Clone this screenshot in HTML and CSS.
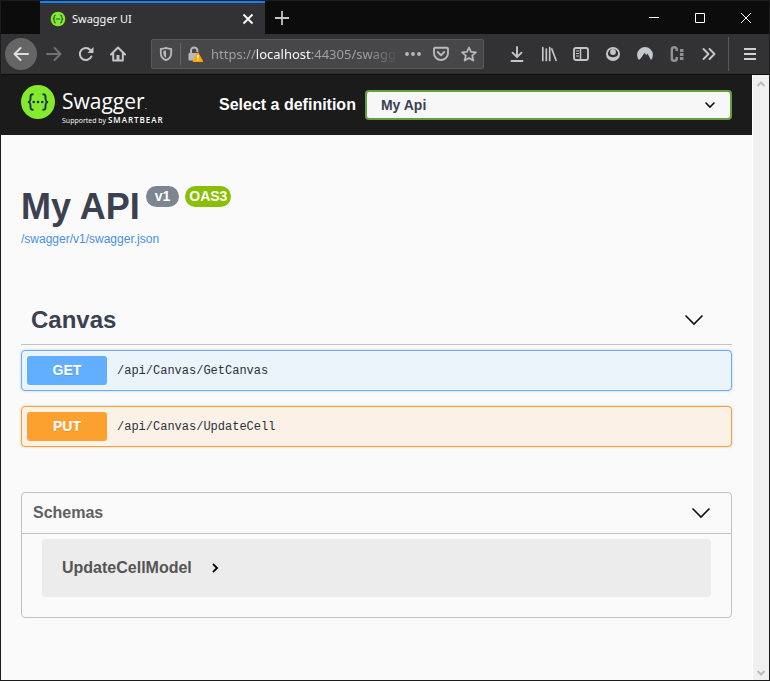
FILE: index.html
```html
<!DOCTYPE html>
<html lang="en">
<head>
<meta charset="utf-8">
<meta name="viewport" content="width=device-width, initial-scale=1">
<title>Swagger UI</title>
<link rel="stylesheet" href="styles.css">
</head>
<body>
<div class="window">
  <div class="tabbar">
    <div class="tab">
      <svg class="favicon" viewBox="0 0 16 16"><circle cx="8" cy="8" r="7.3" fill="#85ea2d"/><path d="M5.7 4.2c-1.4 0-1.4.6-1.4 1.9S3.900 7.800 2.900 8c1 .2 1.400.6 1.400 1.900s0 1.900 1.400 1.900M10.300 4.200c1.400 0 1.400.6 1.400 1.900S12.100 7.800 13.100 8c-1 .2-1.400.6-1.400 1.900s0 1.900-1.400 1.900M5.800 8h4.600" fill="none" stroke="#25602f" stroke-width="1.2"/></svg>
      <span class="tab-title">Swagger UI</span>
      <button class="tab-close" aria-label="Close tab"><svg width="12" height="12" viewBox="0 0 12 12"><path d="M1.500 1.500l9 9M10.500 1.500l-9 9" stroke="#f9f9fa" stroke-width="1.900"/></svg></button>
    </div>
    <button class="new-tab" aria-label="New tab"><svg width="14" height="14" viewBox="0 0 14 14"><path d="M7 0v14M0 7h14" stroke="#c6c6c8" stroke-width="1.800"/></svg></button>
    <div class="window-controls">
      <button aria-label="Minimize"><svg width="12" height="12" viewBox="0 0 12 12"><path d="M1 5.500h10" stroke="#fff"/></svg></button>
      <button aria-label="Maximize"><svg width="12" height="12" viewBox="0 0 12 12"><path d="M1.500 1.500h9v9h-9z" fill="none" stroke="#fff"/></svg></button>
      <button aria-label="Close"><svg width="12" height="12" viewBox="0 0 12 12"><path d="M1 1l10 10M11 1L1 11" stroke="#fff"/></svg></button>
    </div>
  </div>

  <div class="toolbar">
    <button class="tool back" aria-label="Back"><svg class="icon" viewBox="0 0 16 16"><path d="M15 8H1.500M7.500 2L1.500 8l6 6" fill="none" stroke="#dededf" stroke-width="2" stroke-linecap="round" stroke-linejoin="round"/></svg></button>
    <button class="tool" aria-label="Forward"><svg class="icon" viewBox="0 0 16 16"><path d="M1 8h13.500M8.500 2l6 6-6 6" fill="none" stroke="#717173" stroke-width="2" stroke-linecap="round" stroke-linejoin="round"/></svg></button>
    <button class="tool" aria-label="Reload"><svg class="icon" viewBox="0 0 16 16"><path d="M13.300 10.500A6 6 0 1 1 12.300 4" fill="none" stroke="#c6c6c8" stroke-width="2" stroke-linecap="round"/><path d="M15.500 1v6h-6z" fill="#c6c6c8"/></svg></button>
    <button class="tool" aria-label="Home"><svg class="icon" viewBox="0 0 16 16"><path d="M1 8.500L8 1.500l7 7M3.200 7v7.500h9.600V7" fill="none" stroke="#c6c6c8" stroke-width="2" stroke-linecap="round" stroke-linejoin="round"/><path d="M6.500 15v-6h3v6z" fill="#c6c6c8"/></svg></button>
    <div class="urlbar">
      <svg class="icon" viewBox="0 0 16 16"><path d="M8 1.800c1.700.7 3.500 1 5.200 1v4.400c0 3.400-2 5.800-5.200 7-3.200-1.200-5.200-3.600-5.200-7V2.800c1.700 0 3.500-.3 5.200-1z" fill="none" stroke="#b9b9bb" stroke-width="1.800" stroke-linejoin="round"/><path d="M8 4.200v7.600c-1.700-1-2.600-2.500-2.600-4.600V4.800c.9 0 1.800-.2 2.600-.6z" fill="#b9b9bb"/></svg>
      <span class="url-divider"></span>
      <svg class="icon" viewBox="0 0 16 16"><path d="M4 8V4.700a3.200 3.200 0 0 1 6.400-.2V6" fill="none" stroke="#b9b9bb" stroke-width="2"/><rect x="1.500" y="7" width="9" height="7.500" rx="1" fill="#b9b9bb"/><path d="M11 6.700l4.800 8.800H6.200z" fill="#ffa800" stroke="#ffa800" stroke-linejoin="round"/><path d="M11 9v3.300M11 13.300v1.200" stroke="#fff" stroke-width="1.300"/></svg>
      <span class="url">https://<b>localhost</b>:44305/swagg</span>
      <svg class="icon" viewBox="0 0 16 16" fill="#b9b9bb"><circle cx="2" cy="8" r="1.900"/><circle cx="8" cy="8" r="1.900"/><circle cx="14" cy="8" r="1.900"/></svg>
      <svg class="icon" viewBox="0 0 16 16" fill="none" stroke="#b9b9bb" stroke-width="1.900" stroke-linecap="round" stroke-linejoin="round"><path d="M2 1.800h12q1 0 1 1v4.400a7 6.800 0 0 1-14 0V2.800q0-1 1-1z"/><path d="M4.700 6L8 9.200 11.300 6"/></svg>
      <svg class="icon" viewBox="0 0 16 16"><path d="M8 1.500l2 4.400 4.900.5-3.700 3.200 1.100 4.900L8 12l-4.300 2.500 1.100-4.900L1.100 6.400l4.900-.5z" fill="none" stroke="#b9b9bb" stroke-width="1.800" stroke-linejoin="round"/></svg>
    </div>
    <button class="tool" aria-label="Downloads"><svg class="icon" viewBox="0 0 16 16"><path d="M8 1v10M3.500 6.700L8 11.200l4.500-4.500M2.500 15h11" fill="none" stroke="#c6c6c8" stroke-width="1.900" stroke-linecap="round" stroke-linejoin="round"/></svg></button>
    <button class="tool" aria-label="Library"><svg class="icon" viewBox="0 0 16 16"><path d="M1.800 1.500v13M5.300 3v11.500M8.700 1.500v13M10.800 3l4.200 11.300" stroke="#c6c6c8" stroke-width="1.700" stroke-linecap="round"/></svg></button>
    <button class="tool" aria-label="Sidebars"><svg class="icon" viewBox="0 0 16 16"><rect x="1" y="2" width="14" height="12" rx="2" fill="none" stroke="#c6c6c8" stroke-width="1.900"/><path d="M7.500 2v12" stroke="#c6c6c8" stroke-width="1.500"/><path d="M3 5h3M3 7.500h3M3 10h3" stroke="#c6c6c8"/></svg></button>
    <button class="tool" aria-label="Account"><svg class="icon" viewBox="0 0 16 16"><circle cx="8" cy="8" r="6.100" fill="none" stroke="#c6c6c8" stroke-width="1.900"/><circle cx="8" cy="6" r="2.900" fill="#c6c6c8"/><path d="M3 8.500c.8 3.600 9.200 3.600 10 0l.5 2.500c-2 4.200-9 4.200-11 0z" fill="#c6c6c8"/></svg></button>
    <button class="tool" aria-label="VPN"><svg class="icon" viewBox="0 0 16 16"><path d="M2 14A7.900 7.900 0 1 1 14 14L10.500 7.500 9.300 9.300 7.700 6.800 3.800 12.300z" fill="#c6c8d0"/></svg></button>
    <button class="tool" aria-label="Containers"><svg class="icon" viewBox="0 0 16 16"><path d="M7.800 5V3.500Q7.800 1.200 5.300 1.200T2.800 3.500v9q0 2.300 2.500 2.300t2.500-2.300V11" fill="none" stroke="#929294" stroke-width="2.400"/><path d="M12.700 3v11" stroke="#929294" stroke-width="3.500" stroke-dasharray="3 1"/></svg></button>
    <button class="tool" aria-label="More tools"><svg class="icon" viewBox="0 0 16 16"><path d="M2.500 3l5 5-5 5M8.500 3l5 5-5 5" fill="none" stroke="#c6c6c8" stroke-width="1.900" stroke-linecap="round" stroke-linejoin="round"/></svg></button>
    <span class="tool-divider"></span>
    <button class="tool" aria-label="Menu"><svg class="icon" viewBox="0 0 16 16"><path d="M2 3h12M2 8h12M2 13h12" stroke="#d0d0d2" stroke-width="2"/></svg></button>
  </div>

  <div class="viewport">
    <div class="page">
      <header class="topbar">
        <a class="logo" href="#">
          <svg class="logo-mark" viewBox="0 0 34 34"><circle cx="17" cy="17" r="17" fill="#85ea2d"/><g fill="none" stroke="#173647" stroke-width="2"><path d="M12.500 9.200c-3 0-3 1-3 3.500 0 3-.3 4-2.500 4.300 2.200.3 2.500 1.300 2.500 4.300 0 2.500 0 3.500 3 3.500M21.500 9.200c3 0 3 1 3 3.500 0 3 .3 4 2.500 4.300-2.200.3-2.500 1.300-2.500 4.300 0 2.500 0 3.500-3 3.500"/></g><g fill="#173647"><circle cx="12.700" cy="17" r="1.300"/><circle cx="17" cy="17" r="1.300"/><circle cx="21.300" cy="17" r="1.300"/></g></svg>
          <span class="logo-text"><span class="logo-name">Swagger<small>.</small></span><span class="logo-by">Supported by <b>SMARTBEAR</b></span></span>
        </a>
        <label class="select-label" for="definition">Select a definition</label>
        <span class="select-box">
          <select id="definition"><option>My Api</option></select>
          <svg class="select-arrow" viewBox="0 0 12 12"><path d="M2 4l4 4 4-4" fill="none" stroke="#111" stroke-width="1.600" stroke-linecap="round"/></svg>
        </span>
      </header>
      <main class="content">
        <section class="info">
          <h1>My API</h1>
          <span class="badge">v1</span>
          <span class="badge oas">OAS3</span>
          <a href="#">/swagger/v1/swagger.json</a>
        </section>
        <section class="operations">
          <h2>Canvas<svg class="chevron" viewBox="0 0 20 12"><path d="M1.500 1.500L10 10l8.500-8.500" fill="none" stroke="#111" stroke-width="1.600"/></svg></h2>
          <button class="op get"><span class="method">GET</span><span class="path">/api/Canvas/GetCanvas</span></button>
          <button class="op put"><span class="method">PUT</span><span class="path">/api/Canvas/UpdateCell</span></button>
        </section>
        <section class="schemas">
          <h3>Schemas<svg class="chevron" viewBox="0 0 20 12"><path d="M1.500 1.500L10 10l8.500-8.500" fill="none" stroke="#111" stroke-width="1.600"/></svg></h3>
          <button class="model">UpdateCellModel<svg width="12" height="12" viewBox="0 0 12 12"><path d="M4 2l4 4-4 4" fill="none" stroke="#000" stroke-width="1.800"/></svg></button>
        </section>
      </main>
    </div>
    <div class="scrollbar" aria-hidden="true">
      <svg width="10" height="10" viewBox="0 0 10 10"><path d="M1.500 7L5 3.500 8.500 7" fill="none" stroke="#bdbdbd" stroke-width="2"/></svg>
      <svg width="10" height="10" viewBox="0 0 10 10"><path d="M1.500 3L5 6.500 8.500 3" fill="none" stroke="#bdbdbd" stroke-width="2"/></svg>
    </div>
  </div>
</div>
</body>
</html>
```
FILE: styles.css
```css
* {
  box-sizing: border-box;
}

body {
  margin: 0;
  font-family: "Liberation Sans", Arial, sans-serif;
  color: #3b4151;
}

button {
  margin: 0;
  padding: 0;
  border: 0;
  background: none;
  color: inherit;
  font: inherit;
}

svg {
  display: block;
  flex: none;
}

.window {
  display: flex;
  flex-direction: column;
  min-height: 100vh;
  border: 1px solid #1c1c1f;
  background: #323234;
}

/* Browser chrome */

.tabbar {
  display: flex;
  height: 33px;
  background: #0c0c0d;
}

.tab {
  display: flex;
  align-items: center;
  width: 225px;
  margin-left: 39px;
  padding: 0 11px 0 10px;
  border-top: 2px solid #0a84ff;
  background: #323234;
}

.favicon {
  width: 16px;
  height: 16px;
}

.tab-title {
  flex: 1;
  margin-left: 6px;
  color: #f9f9fa;
  font: 11px "Noto Sans", sans-serif;
}

.new-tab {
  display: grid;
  place-items: center;
  width: 34px;
}

.window-controls {
  display: flex;
  margin-left: auto;
}

.window-controls button {
  display: grid;
  place-items: center;
  width: 46px;
}

.toolbar {
  display: flex;
  align-items: center;
  height: 41px;
  padding: 0 3px 0 4px;
  border-bottom: 1px solid #0c0c0d;
}

.icon {
  width: 16px;
  height: 16px;
}

.tool {
  display: grid;
  flex: none;
  place-items: center;
  width: 32px;
  height: 32px;
}

.back {
  margin-right: 1px;
  border-radius: 50%;
  background: #656566;
}

.urlbar {
  display: flex;
  flex: 1;
  align-items: center;
  gap: 12px;
  min-width: 0;
  height: 30px;
  margin: 0 17px;
  padding: 0 6px;
  border: 1px solid #5a5a5c;
  border-radius: 2px;
  background: #474749;
}

.url-divider {
  width: 1px;
  height: 22px;
  margin: 0 -6px;
  background: #5f6670;
}

.url {
  flex: 1;
  min-width: 0;
  margin: 0 -6px 0 -4px;
  overflow: hidden;
  color: #a0a0a2;
  font: 13px "Noto Sans", sans-serif;
  white-space: nowrap;
  mask-image: linear-gradient(to left, transparent, #000 32px);
}

.url b {
  color: #f9f9fa;
  font-weight: 400;
}

.tool-divider {
  width: 1px;
  height: 34px;
  margin: 0 5px 0 3px;
  background: #5a5a5c;
}

/* Page */

.viewport {
  display: flex;
  flex: 1;
}

.page {
  flex: 1;
  min-width: 0;
  background: #fafafa;
}

.scrollbar {
  display: flex;
  flex-direction: column;
  align-items: center;
  justify-content: space-between;
  width: 17px;
  padding: 4px 0 2px;
  border-left: 1px solid #fff;
  background: #f0f0f0;
}

.topbar {
  display: flex;
  align-items: center;
  height: 60px;
  padding: 0 20px;
  background: #1b1b1b;
}

.logo {
  display: flex;
  flex: none;
  gap: 7px;
  width: 198px;
  height: 40px;
  color: #fff;
  text-decoration: none;
}

.logo-mark {
  width: 34px;
  height: 34px;
}

.logo-text {
  display: flex;
  flex-direction: column;
  gap: 3px;
  padding-top: 4px;
}

.logo-name {
  font: 400 21px/24px "Open Sans", sans-serif;
}

.logo-name small {
  font-size: 8px;
  line-height: 1;
}

.logo-by {
  font: 7px/10px "Open Sans", sans-serif;
  white-space: nowrap;
}

.logo-by b {
  font-size: 8px;
  font-weight: 600;
  letter-spacing: 1px;
  line-height: 1;
}

.select-label {
  flex: none;
  margin-right: 9px;
  color: #fff;
  font-size: 16px;
  font-weight: 700;
}

.select-box {
  position: relative;
  flex: 1;
}

.select-box select {
  display: block;
  width: 100%;
  height: 30px;
  padding: 0 40px 0 14px;
  border: 2px solid #62a03f;
  border-radius: 4px;
  appearance: none;
  background: #f7f7f7;
  color: #3b4151;
  font: 700 14px "Liberation Sans", Arial, sans-serif;
}

.select-arrow {
  position: absolute;
  top: 9px;
  right: 16px;
  width: 12px;
  height: 12px;
  pointer-events: none;
}

.content {
  padding: 50px 20px 62px;
}

.info {
  display: flex;
  flex-wrap: wrap;
  align-items: flex-start;
  gap: 0 6px;
}

.info h1 {
  margin: 0;
  font-size: 36px;
  line-height: 44px;
}

.badge {
  margin-top: 1px;
  padding: 0 9px;
  border-radius: 12px;
  background: #7d8492;
  color: #fff;
  font-size: 14px;
  font-weight: 700;
  line-height: 21px;
}

.oas {
  padding: 0 4px;
  background: #89bf04;
}

.info a {
  flex-basis: 100%;
  color: #4990e2;
  font-size: 12px;
  line-height: 20px;
  text-decoration: none;
}

.operations h2 {
  display: flex;
  align-items: center;
  justify-content: space-between;
  height: 50px;
  margin: 46px 0 5px;
  padding: 0 28px 0 10px;
  border-bottom: 1px solid #c2c2c5;
  font-size: 24px;
}

.chevron {
  width: 20px;
  height: 12px;
}

.op {
  display: flex;
  align-items: center;
  gap: 10px;
  width: 100%;
  height: 41px;
  margin-bottom: 15px;
  padding: 5px;
  border: 1px solid #61affe;
  border-radius: 4px;
  background: #ebf3fb;
  box-shadow: 0 0 3px rgba(0, 0, 0, 0.19);
}

.method {
  width: 80px;
  border-radius: 3px;
  background: #61affe;
  color: #fff;
  font-size: 14px;
  font-weight: 700;
  line-height: 29px;
  text-shadow: 0 1px 0 rgba(0, 0, 0, 0.1);
}

.path {
  color: #2b3040;
  font: 400 12px "Liberation Mono", monospace;
}

.put {
  border-color: #fca130;
  background: #fbf1e6;
}

.put .method {
  background: #fca130;
}

.schemas {
  margin-top: 45px;
  border: 1px solid #c2c2c5;
  border-radius: 4px;
}

.schemas h3 {
  display: flex;
  align-items: center;
  justify-content: space-between;
  height: 41px;
  margin: 0 0 5px;
  padding: 0 20px 0 11px;
  border-bottom: 1px solid #c2c2c5;
  color: #606060;
  font-size: 16px;
}

.model {
  display: flex;
  align-items: center;
  gap: 17px;
  width: calc(100% - 40px);
  height: 58px;
  margin: 0 20px 20px;
  padding: 0 20px;
  border-radius: 4px;
  background: #ececec;
  color: #555;
  font-size: 16px;
  font-weight: 700;
}
```
